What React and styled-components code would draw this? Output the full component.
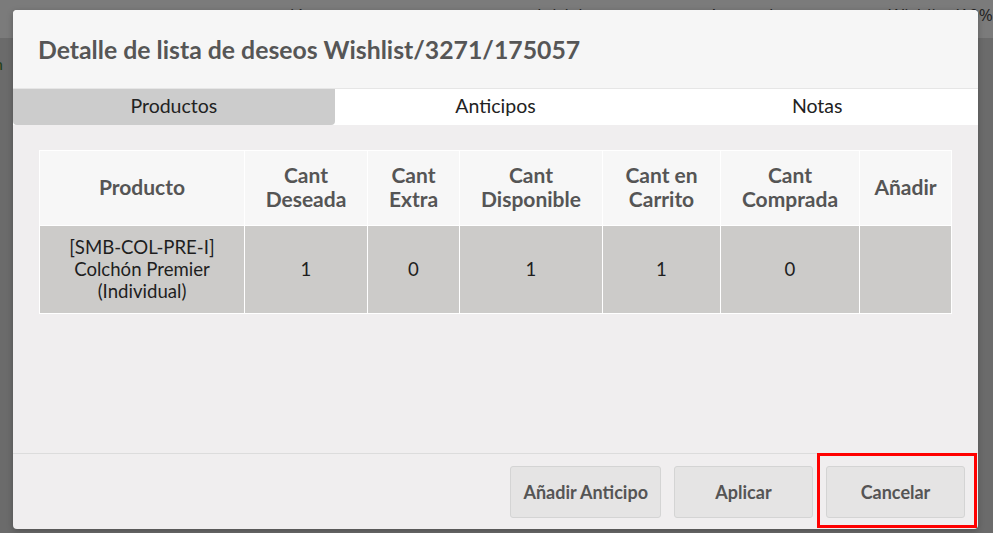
import React from "react";
import styled, { createGlobalStyle } from "styled-components";

const Global = createGlobalStyle`
  html, body { margin: 0; padding: 0; }
  body { font-family: Lato, "Open Sans", sans-serif; overflow: hidden; }
`;

const Page = styled.div`
  position: relative;
  width: 993px;
  height: 533px;
  background: #6b6b6b;
  overflow: hidden;
`;

const BackBar = styled.div`
  height: 38px;
  background: #7b7b7b;
  display: flex;
  align-items: flex-start;
  font-family: "Open Sans", Lato, sans-serif;
  font-size: 17px;
  color: #222;
  padding-top: 3px;
  box-sizing: border-box;
`;

const BackCell = styled.span`
  margin-left: ${(p) => p.$left}px;
  white-space: nowrap;
`;

const BackNote = styled.div`
  padding-top: 16px;
  font-family: Lato, sans-serif;
  font-size: 16px;
  color: #1f3f14;
  margin-left: -6px;
`;

const Modal = styled.div`
  position: absolute;
  left: 13px;
  top: 10px;
  width: 965px;
  height: 519px;
  background: #f0eeef;
  border-radius: 4px;
  display: flex;
  flex-direction: column;
  overflow: hidden;
  box-shadow: 0 2px 6px rgba(0, 0, 0, 0.25);
`;

const Header = styled.div`
  height: 79px;
  flex: none;
  background: #f6f6f6;
  border-bottom: 1px solid #e6e6e6;
  display: flex;
  align-items: center;
  padding-left: 25px;
  box-sizing: border-box;
`;

const Title = styled.h2`
  margin: 0;
  font-size: 24.8px;
  font-weight: 700;
  color: #565656;
`;

const Tabs = styled.div`
  display: flex;
  flex: none;
  height: 36px;
  background: #ffffff;
`;

const Tab = styled.div`
  flex: 1;
  display: flex;
  align-items: center;
  justify-content: center;
  padding-bottom: 3px;
  box-sizing: border-box;
  font-size: 19.5px;
  color: #222;
  background: ${(p) => (p.$active ? "#cccccc" : "#ffffff")};
  border-radius: ${(p) => (p.$active ? "0 0 4px 4px" : "0")};
`;

const Body = styled.div`
  flex: 1;
  padding: 25px 27px 0 26px;
`;

const Table = styled.table`
  width: 912px;
  border-collapse: collapse;
  table-layout: fixed;
  border: 1px solid #ffffff;
`;

const HeadCell = styled.th`
  height: 72px;
  background: #f7f7f7;
  border: 1px solid #ffffff;
  font-size: 21px;
  font-weight: 700;
  color: #555;
  line-height: 24px;
  text-align: center;
  vertical-align: middle;
  padding: 0 2px 2px;
`;

const Cell = styled.td`
  height: 85px;
  background: #cccbc9;
  border: 1px solid #ffffff;
  font-size: 18.6px;
  color: #1e1e1e;
  line-height: 22px;
  text-align: center;
  vertical-align: middle;
  padding: 0 2px 2px;
`;

const Footer = styled.div`
  position: relative;
  flex: none;
  height: 76px;
  border-top: 1px solid #dcdcdc;
  display: flex;
  justify-content: flex-end;
  align-items: flex-start;
  gap: 13px;
  padding: 12px 13px 0 0;
  box-sizing: border-box;
`;

const Button = styled.button`
  height: 52px;
  min-width: 139px;
  padding: 0 12px;
  background: #e5e4e4;
  border: 1px solid #d4d4d4;
  border-radius: 3px;
  font-family: Lato, sans-serif;
  font-size: 18px;
  font-weight: 700;
  color: #555;
`;

const Highlight = styled.div`
  position: absolute;
  left: 804px;
  top: -1px;
  width: 154px;
  height: 69px;
  border: 3px solid #ff0000;
  pointer-events: none;
`;

const headers = [
  ["Producto"],
  ["Cant", "Deseada"],
  ["Cant", "Extra"],
  ["Cant", "Disponible"],
  ["Cant en", "Carrito"],
  ["Cant", "Comprada"],
  ["Añadir"],
];
const widths = [205, 123, 92, 143, 118, 139, 92];

export default function App() {
  return (
    <>
      <Global />
      <Page>
        <BackBar>
          <BackCell $left={290}>ión</BackCell>
          <BackCell $left={222}>Inicial</BackCell>
          <BackCell $left={126}>Aceptado</BackCell>
          <BackCell $left={105}>Wishlist (10%</BackCell>
        </BackBar>
        <BackNote>n</BackNote>
        <Modal>
          <Header>
            <Title>Detalle de lista de deseos Wishlist/3271/175057</Title>
          </Header>
          <Tabs>
            <Tab $active>Productos</Tab>
            <Tab>Anticipos</Tab>
            <Tab>Notas</Tab>
          </Tabs>
          <Body>
            <Table>
              <colgroup>
                {widths.map((w, i) => (
                  <col key={i} style={{ width: w }} />
                ))}
              </colgroup>
              <thead>
                <tr>
                  {headers.map((h, i) => (
                    <HeadCell key={i}>
                      {h.map((l, j) => (
                        <React.Fragment key={j}>
                          {j > 0 && <br />}
                          {l}
                        </React.Fragment>
                      ))}
                    </HeadCell>
                  ))}
                </tr>
              </thead>
              <tbody>
                <tr>
                  <Cell>
                    [SMB-COL-PRE-I]
                    <br />
                    Colchón Premier
                    <br />
                    (Individual)
                  </Cell>
                  <Cell>1</Cell>
                  <Cell>0</Cell>
                  <Cell>1</Cell>
                  <Cell>1</Cell>
                  <Cell>0</Cell>
                  <Cell></Cell>
                </tr>
              </tbody>
            </Table>
          </Body>
          <Footer>
            <Button>Añadir Anticipo</Button>
            <Button>Aplicar</Button>
            <Button>Cancelar</Button>
            <Highlight />
          </Footer>
        </Modal>
      </Page>
    </>
  );
}
